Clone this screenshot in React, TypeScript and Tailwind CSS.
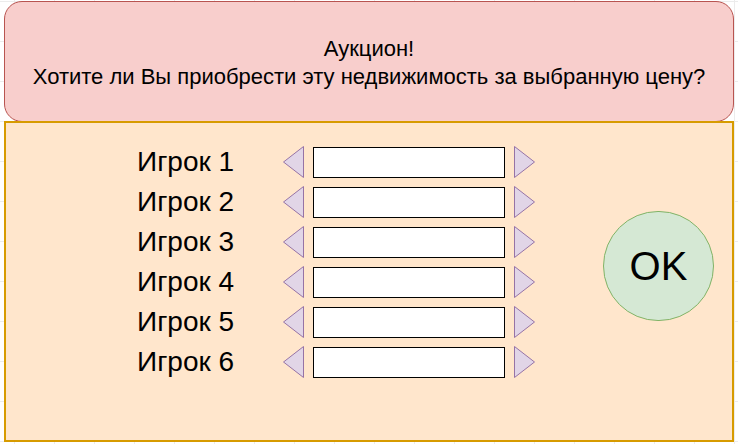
import React from 'react';

const players = ['Игрок 1', 'Игрок 2', 'Игрок 3', 'Игрок 4', 'Игрок 5', 'Игрок 6'];

const Arrow: React.FC<{ dir: 'left' | 'right' }> = ({ dir }) => (
  <svg width="22" height="32" viewBox="0 0 22 32" className="shrink-0">
    {dir === 'left' ? (
      <polygon points="20.5,0.5 20.5,31.5 0.5,16" fill="#e1d5e7" stroke="#9673a6" strokeWidth="1" />
    ) : (
      <polygon points="1.5,0.5 1.5,31.5 21.5,16" fill="#e1d5e7" stroke="#9673a6" strokeWidth="1" />
    )}
  </svg>
);

export default function App() {
  return (
    <div
      className="w-[738px] h-[444px] overflow-hidden bg-white bg-[linear-gradient(to_right,#ececec_1px,transparent_1px),linear-gradient(to_bottom,#ececec_1px,transparent_1px)] bg-[size:40px_40px] bg-[position:14px_1px] flex flex-col px-[4px] pt-[1px]"
      style={{ fontFamily: '"Liberation Sans", Arial, sans-serif' }}
    >
      <div className="h-[121px] shrink-0 rounded-[18px] border border-[#b85450] bg-[#f8cecc] flex flex-col items-center justify-center text-[22px] leading-[28px] text-black pt-[2px]">
        <div>Аукцион!</div>
        <div>Хотите ли Вы приобрести эту недвижимость за выбранную цену?</div>
      </div>
      <div className="h-[321px] shrink-0 -mt-px border-2 border-[#d79b00] bg-[#ffe6cc] flex items-start pl-[131px] pt-[23px]">
        <div className="flex flex-col gap-[8px]">
          {players.map((p) => (
            <div key={p} className="flex items-center h-[32px]">
              <div className="w-[146px] text-[28px] leading-none text-black">{p}</div>
              <Arrow dir="left" />
              <div className="ml-[8px] w-[192px] h-[31px] border border-black bg-white" />
              <div className="ml-[8px]">
                <Arrow dir="right" />
              </div>
            </div>
          ))}
        </div>
        <div className="ml-[68px] mt-[65px] w-[111px] h-[110px] rounded-full border border-[#82b366] bg-[#d5e8d4] flex items-center justify-center text-[40px] text-black">
          OK
        </div>
      </div>
    </div>
  );
}
